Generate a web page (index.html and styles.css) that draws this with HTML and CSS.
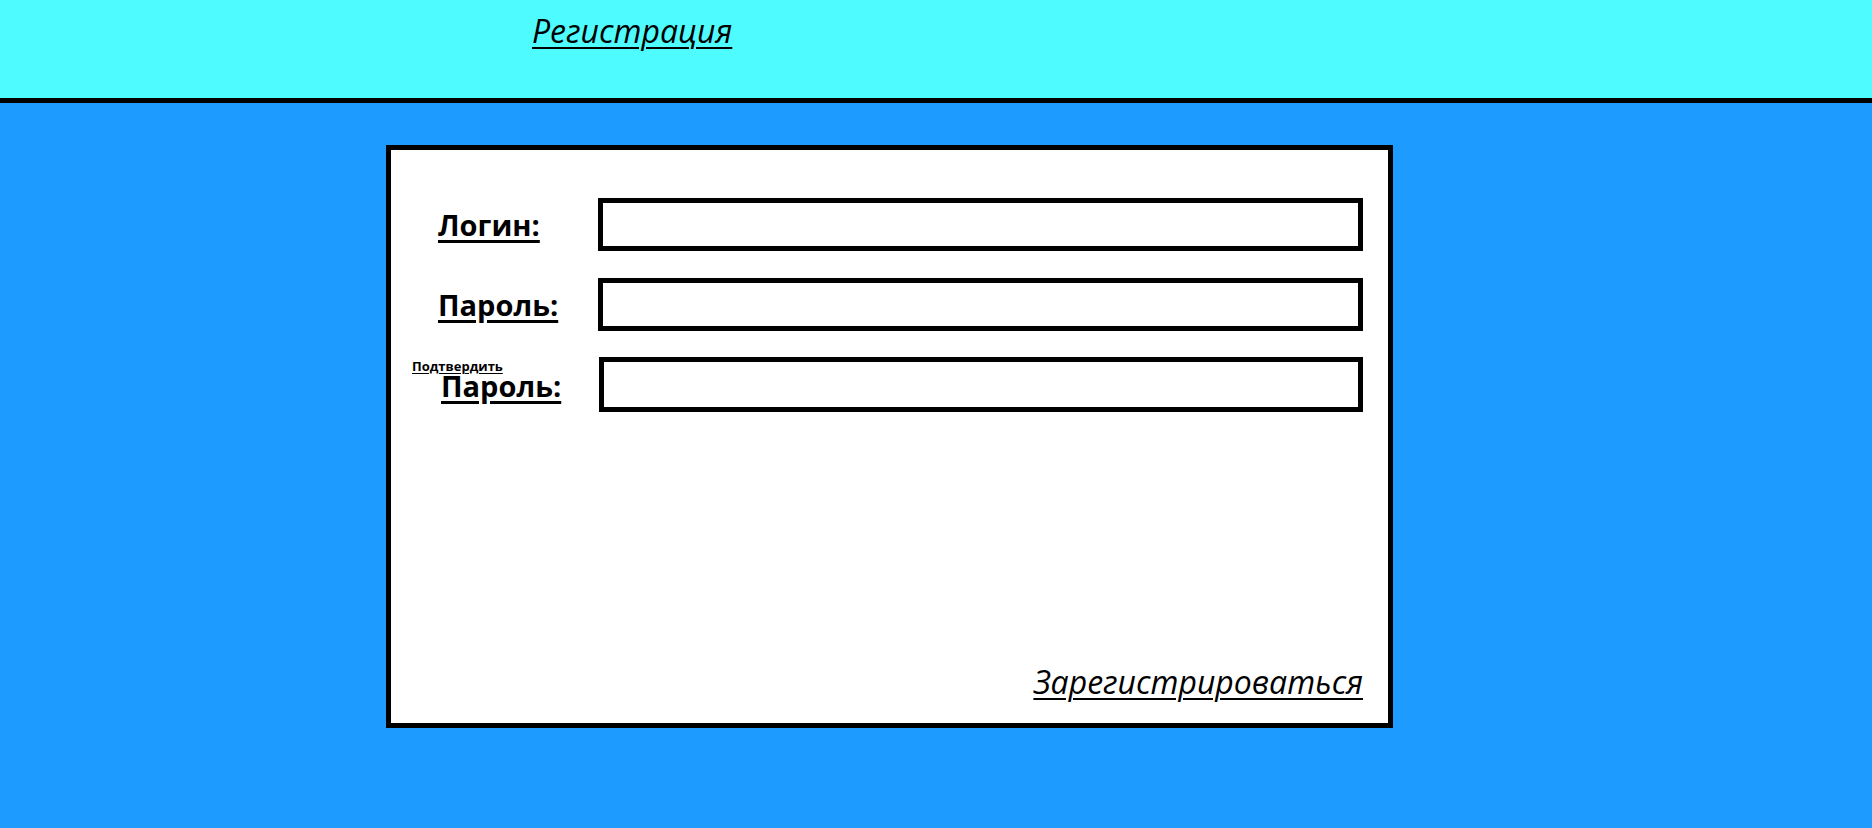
FILE: index.html
```html
<!DOCTYPE html>
<html lang="ru">
<head>
<meta charset="utf-8">
<title>Регистрация</title>
<link rel="stylesheet" href="styles.css">
</head>
<body>
<header class="top">
  <a class="top-link" href="#">Регистрация</a>
</header>
<main class="page">
  <form class="card">
    <div class="row">
      <label class="label"><span class="label-text">Логин:</span></label>
      <input class="field" type="text">
    </div>
    <div class="row">
      <label class="label"><span class="label-text">Пароль:</span></label>
      <input class="field" type="password">
    </div>
    <div class="row">
      <label class="label label-confirm"><span class="label-small">Подтвердить</span><span class="label-text label-text-tight">Пароль:</span></label>
      <input class="field field-confirm" type="password">
    </div>
    <div class="actions">
      <a class="submit-link" href="#">Зарегистрироваться</a>
    </div>
  </form>
</main>
</body>
</html>
```

FILE: styles.css
```css
html, body {
  margin: 0;
  padding: 0;
}
body {
  background: #1d9bff;
  font-family: "Open Sans", "Liberation Sans", sans-serif;
  color: #000;
  min-height: 828px;
}
.top {
  height: 98px;
  background: #4efbff;
  border-bottom: 5px solid #000;
  padding-left: 532px;
  box-sizing: content-box;
}
.top-link {
  display: inline-block;
  color: #000;
  font-style: italic;
  font-size: 32px;
  line-height: 38px;
  padding-top: 12px;
  text-decoration: underline;
  text-decoration-thickness: 2px;
  text-underline-offset: 4px;
}
.page {
  padding: 42px 0 0 386px;
}
.card {
  box-sizing: border-box;
  width: 1007px;
  height: 583px;
  background: #fff;
  border: 5px solid #000;
  padding: 48px 25px 22px 47px;
  display: flex;
  flex-direction: column;
  gap: 27px;
}
.row {
  display: flex;
  align-items: center;
  height: 53px;
}
.label {
  box-sizing: border-box;
  width: 160px;
  flex: none;
  display: flex;
  flex-direction: column;
}
.label-text {
  font-weight: bold;
  font-size: 29px;
  line-height: 36px;
  text-decoration: underline;
  text-decoration-thickness: 3px;
  text-underline-offset: 4px;
}
.label-text-tight {
  line-height: 24px;
}
.label-confirm {
  padding-left: 3px;
  align-self: flex-start;
}
.label-small {
  font-weight: bold;
  font-size: 13px;
  line-height: 12px;
  margin: 2px 0 2px -29px;
  text-decoration: underline;
  text-decoration-thickness: 1px;
  text-underline-offset: 2px;
}
.field {
  box-sizing: border-box;
  width: 765px;
  height: 53px;
  margin: 0;
  border: 5px solid #000;
  border-radius: 0;
  background: #fff;
  outline: none;
  padding: 0 8px;
}
.field-confirm {
  margin-left: 1px;
  height: 55px;
}
.actions {
  margin-top: auto;
  display: flex;
  justify-content: flex-end;
}
.submit-link {
  color: #000;
  font-style: italic;
  font-size: 32px;
  line-height: 38px;
  text-decoration: underline;
  text-decoration-thickness: 2px;
  text-underline-offset: 4px;
}
```
